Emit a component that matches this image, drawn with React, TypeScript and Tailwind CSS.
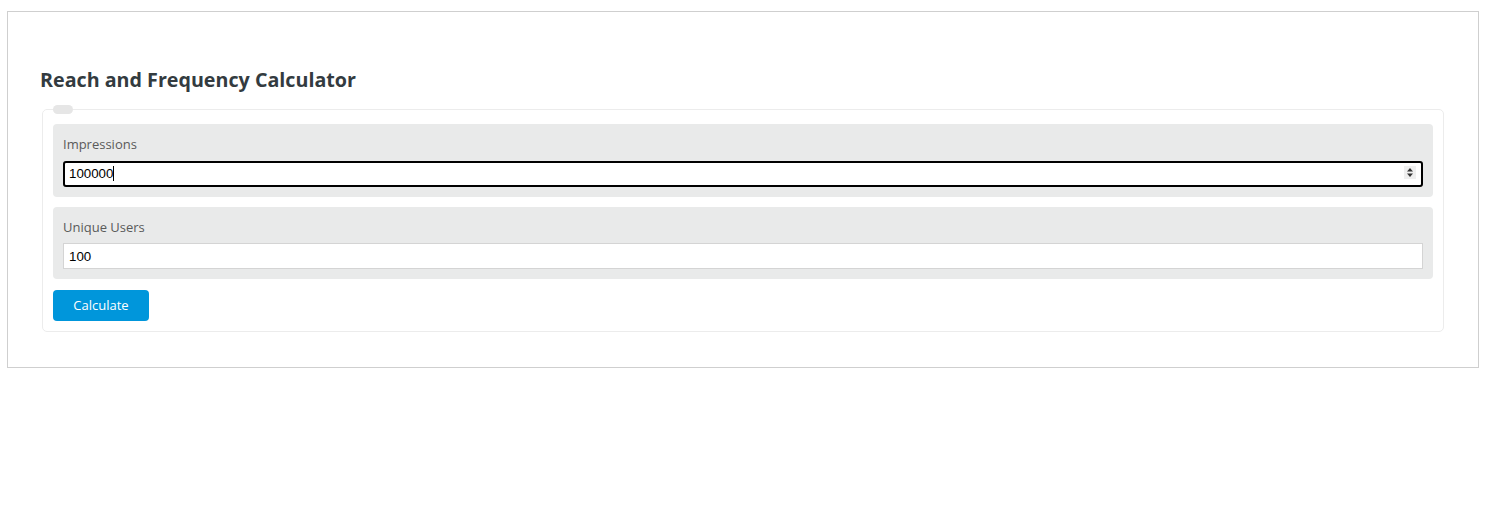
export default function App() {
  return (
    <div className="bg-white min-h-screen pt-[11px] pl-[7px]">
      <div
        className="w-[1472px] border border-[#cfcfcf] px-[34px] pt-[55px] pb-[35px]"
        style={{ fontFamily: '"Open Sans", "Noto Sans", sans-serif' }}
      >
        <h1 className="text-[19.7px] leading-[26px] font-bold text-[#333b40] mb-[12px] -ml-[2px]">
          Reach and Frequency Calculator
        </h1>
        <fieldset className="border border-[#ececec] rounded-[5px] px-[10px] pb-[10px] pt-[10px]">
          <legend className="ml-0 w-[20px] h-[9px] rounded-full bg-[#e6e6e6]" />
          <div className="bg-[#e9eaea] rounded-[4px] p-[10px] mb-[10px]">
            <label className="block text-[13px] leading-[20px] text-[#5a5a5a] mb-[6px]">
              Impressions
            </label>
            <div className="relative">
              <input
                type="text"
                readOnly
                value="100000"
                className="w-full h-[26px] border-2 border-black rounded-[3px] bg-white px-[4px] text-[13.3px] text-black outline-none"
                style={{ fontFamily: '"Liberation Sans", Arial, sans-serif' }}
              />
              <span className="absolute left-[50px] top-[6px] w-px h-[15px] bg-black" />
              <svg
                className="absolute right-[7px] top-[6px]"
                width="12"
                height="13"
                viewBox="0 0 12 13"
              >
                <rect width="12" height="13" fill="#efefef" />
                <path d="M3 5.5 L6 2 L9 5.5 Z" fill="#333" />
                <path d="M3 7.5 L6 11 L9 7.5 Z" fill="#333" />
              </svg>
            </div>
          </div>
          <div className="bg-[#e9eaea] rounded-[4px] p-[10px] mb-[11px]">
            <label className="block text-[13px] leading-[20px] text-[#5a5a5a] mb-[6px]">
              Unique Users
            </label>
            <input
              type="text"
              readOnly
              value="100"
              className="w-full h-[26px] border border-[#d4d4d4] bg-white px-[5px] text-[13.3px] text-black outline-none"
              style={{ fontFamily: '"Liberation Sans", Arial, sans-serif' }}
            />
          </div>
          <button className="w-[96px] h-[31px] rounded-[4px] bg-[#0096db] text-white text-[13px]">
            Calculate
          </button>
        </fieldset>
      </div>
    </div>
  );
}
